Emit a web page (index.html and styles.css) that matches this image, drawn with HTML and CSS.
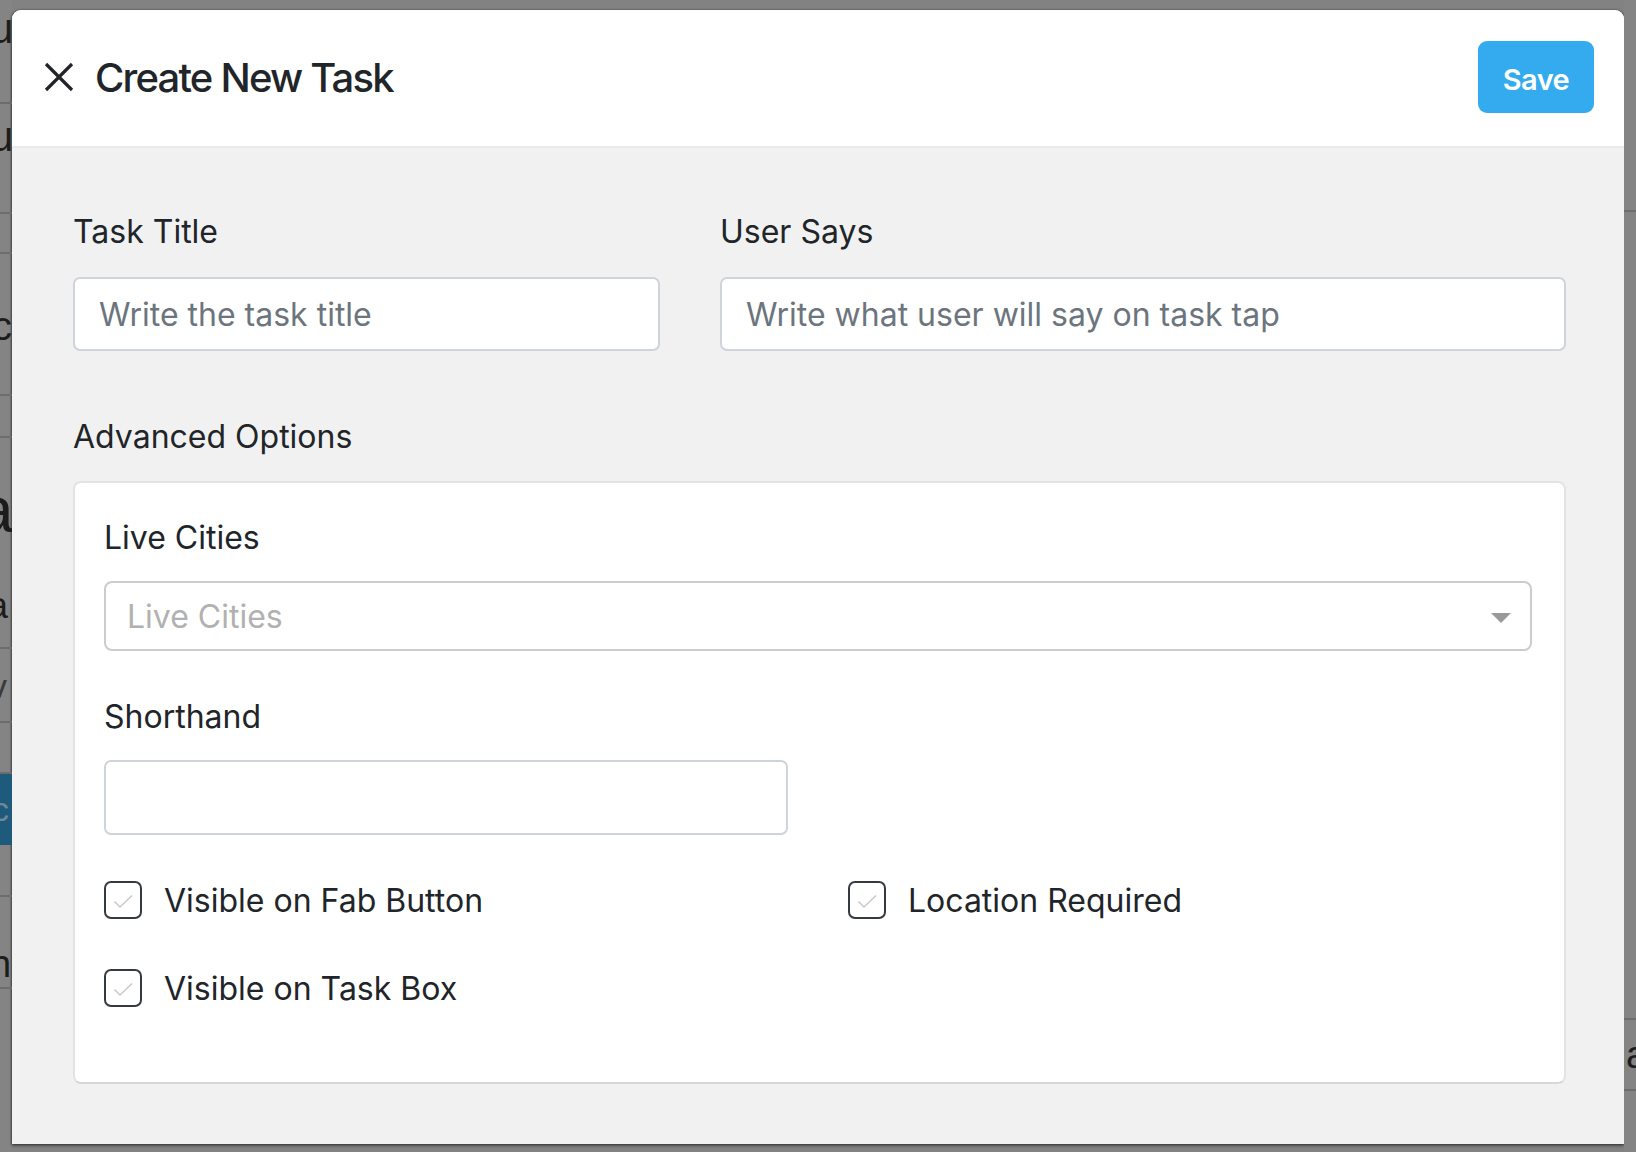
FILE: index.html
```html
<!DOCTYPE html>
<html lang="en">
<head>
<meta charset="utf-8">
<title>Create New Task</title>
<link rel="stylesheet" href="styles.css">
</head>
<body>
<div class="strip strip-left">
  <div class="bg-row lr1"><span class="bg-glyph g-u1">u</span></div>
  <div class="bg-row lr2"><span class="bg-glyph g-u2">u</span></div>
  <div class="bg-row lr3"></div>
  <div class="bg-row lr4"><span class="bg-glyph g-c">c</span></div>
  <div class="bg-row lr5"></div>
  <div class="bg-row lr6"><span class="bg-glyph g-a1">a</span><span class="bg-glyph g-a2">a</span></div>
  <div class="bg-row lr7"><span class="bg-glyph g-v">v</span></div>
  <div class="bg-row lr8"></div>
  <div class="bg-row lr9 bg-blue"><span class="bg-glyph g-c2">c</span></div>
  <div class="bg-row lr10"></div>
  <div class="bg-row lr11"><span class="bg-glyph g-n">n</span></div>
  <div class="bg-row lr12 no-line"></div>
</div>

<div class="modal">
  <header class="modal-header">
    <button class="close-btn" type="button" aria-label="Close">
      <svg width="30" height="30" viewBox="0 0 30 30"><path d="M2 2 L28 28 M28 2 L2 28" stroke="#212529" stroke-width="3.2" fill="none" stroke-linecap="butt"/></svg>
    </button>
    <h1 class="modal-title">Create New Task</h1>
    <button class="save-btn" type="button">Save</button>
  </header>

  <main class="modal-body">
    <div class="top-grid">
      <div class="field">
        <label class="field-label">Task Title</label>
        <input class="text-input" type="text" placeholder="Write the task title">
      </div>
      <div class="field">
        <label class="field-label">User Says</label>
        <input class="text-input" type="text" placeholder="Write what user will say on task tap">
      </div>
    </div>

    <div class="section-label">Advanced Options</div>

    <div class="card">
      <div class="field-label card-label">Live Cities</div>
      <div class="select">
        <span class="select-placeholder">Live Cities</span>
        <span class="select-arrow"></span>
      </div>

      <div class="field-label card-label shorthand-label">Shorthand</div>
      <div class="half-grid">
        <input class="text-input short-input" type="text">
      </div>

      <div class="check-grid">
        <div class="check-item">
          <span class="check-box"><svg width="38" height="38" viewBox="0 0 38 38"><path d="M10.5 20.5 L16 26 L28 14.5" stroke="#c9c9c9" stroke-width="1.5" fill="none"/></svg></span>
          <span class="check-label">Visible on Fab Button</span>
        </div>
        <div class="check-item">
          <span class="check-box"><svg width="38" height="38" viewBox="0 0 38 38"><path d="M10.5 20.5 L16 26 L28 14.5" stroke="#c9c9c9" stroke-width="1.5" fill="none"/></svg></span>
          <span class="check-label">Location Required</span>
        </div>
        <div class="check-item">
          <span class="check-box"><svg width="38" height="38" viewBox="0 0 38 38"><path d="M10.5 20.5 L16 26 L28 14.5" stroke="#c9c9c9" stroke-width="1.5" fill="none"/></svg></span>
          <span class="check-label">Visible on Task Box</span>
        </div>
      </div>
    </div>
  </main>
</div>

<div class="strip strip-right">
  <div class="bg-row rr1"></div>
  <div class="bg-row rr2"></div>
  <div class="bg-row rr3"></div>
  <div class="bg-row rr4"><span class="bg-glyph g-ra">a</span></div>
  <div class="bg-row rr5 no-line"></div>
</div>
</body>
</html>
```

FILE: styles.css
```css
* { box-sizing: border-box; }

html, body {
  margin: 0;
  padding: 0;
  width: 1636px;
  height: 1152px;
  overflow: hidden;
}

body {
  display: flex;
  align-items: flex-start;
  background: #828282;
  font-family: Inter, "Noto Sans", "Liberation Sans", sans-serif;
  color: #212529;
}

/* ---------- dimmed page behind the modal ---------- */
.strip {
  flex: 0 0 12px;
  height: 1152px;
  overflow: hidden;
  display: flex;
  flex-direction: column;
  background: #848484;
}
.strip-right { flex-basis: 12px; }

.bg-row {
  flex: 0 0 auto;
  border-bottom: 2px solid #6c6c6c;
  position: relative;
  white-space: nowrap;
  font-family: "Liberation Sans", sans-serif;
  color: #1c1c1c;
}
.bg-row.no-line { border-bottom: none; flex: 1 1 auto; }
.bg-blue { background: #1e5a7c; }

.lr1 { height: 104px; }
.lr2 { height: 110px; }
.lr3 { height: 40px; }
.lr4 { height: 142px; }
.lr5 { height: 42px; }
.lr6 { height: 211px; }
.lr7 { height: 74px; }
.lr8 { height: 51px; }
.lr9 { height: 71px; border-bottom: none; }
.lr10 { height: 52px; }
.lr11 { height: 92px; }

.rr1 { height: 212px; }
.rr2 { height: 808px; }
.rr3 { height: 0; border-bottom: none; }
.rr4 { height: 71px; }

.bg-glyph {
  position: absolute;
  line-height: 1;
}
.g-u1 { top: 8px; left: -10px; font-size: 42px; }
.g-u2 { top: 12px; left: -10px; font-size: 42px; }
.g-c { top: 52px; left: -8px; font-size: 40px; }
.g-a1 { top: 40px; left: -22px; font-size: 64px; }
.g-a2 { top: 150px; left: -12px; font-size: 36px; }
.g-v { top: 20px; left: -10px; font-size: 34px; color: #3a3a3a; }
.g-c2 { top: 18px; left: -8px; font-size: 34px; color: #6f8797; }
.g-n { top: 48px; left: -10px; font-size: 38px; }
.g-ra { top: 16px; left: 2px; font-size: 38px; }

/* ---------- modal ---------- */
.modal {
  flex: 0 0 1612px;
  height: 1134px;
  margin-top: 10px;
  background: #f1f1f1;
  border-radius: 9px 9px 0 0;
  overflow: hidden;
  display: flex;
  flex-direction: column;
  box-shadow: -1px 0 2px rgba(0,0,0,0.35), 1px 0 2px rgba(0,0,0,0.35), 0 2px 3px rgba(0,0,0,0.4);
}

.modal-header {
  flex: 0 0 138px;
  background: #ffffff;
  border-bottom: 2px solid #e8ebee;
  display: flex;
  align-items: center;
  padding: 0 30px 2px 32px;
}

.close-btn {
  border: none;
  background: none;
  padding: 0;
  margin: 0;
  width: 30px;
  height: 30px;
  display: flex;
  align-items: center;
  justify-content: center;
}

.modal-title {
  margin: 0 0 0 21px;
  font-size: 40px;
  font-weight: 500;
  letter-spacing: -1.8px;
  color: #212529;
  flex: 1 1 auto;
}

.save-btn {
  width: 116px;
  height: 72px;
  border: none;
  border-radius: 9px;
  background: #34abef;
  color: #ffffff;
  font-family: Inter, "Noto Sans", sans-serif;
  font-size: 29px;
  font-weight: 600;
  letter-spacing: -0.6px;
  padding: 5px 0 0 0;
}

.modal-body {
  flex: 1 1 auto;
  padding: 60px 58px 0 61px;
}

.top-grid {
  display: grid;
  grid-template-columns: 587px 846px;
  column-gap: 60px;
}

.field { display: flex; flex-direction: column; }

.field-label {
  display: block;
  font-size: 32px;
  line-height: 48px;
  color: #212529;
  margin-bottom: 21px;
}

.text-input {
  height: 74px;
  width: 100%;
  border: 2px solid #ced4da;
  border-radius: 7px;
  background: #ffffff;
  padding: 0 24px;
  font-family: Inter, "Noto Sans", sans-serif;
  font-size: 32px;
  color: #495057;
  outline: none;
}
.text-input::placeholder { color: #6c757d; opacity: 1; }

.section-label {
  font-size: 32px;
  line-height: 48px;
  margin-top: 62px;
  margin-bottom: 20px;
}

.card {
  background: #ffffff;
  border: 2px solid #e3e3e3;
  border-bottom-color: #d7d7d7;
  border-radius: 8px;
  padding: 31px 32px 70px 29px;
}

.card-label { margin-bottom: 19px; }

.select {
  height: 70px;
  border: 2px solid #cccccc;
  border-radius: 8px;
  display: flex;
  align-items: center;
  justify-content: space-between;
  padding: 0 19px 0 21px;
}
.select-placeholder {
  font-size: 32px;
  color: #b1b1b1;
}
.select-arrow {
  width: 0;
  height: 0;
  border-left: 10px solid transparent;
  border-right: 10px solid transparent;
  border-top: 10px solid #999999;
  margin-top: 4px;
}

.shorthand-label { margin-top: 42px; margin-bottom: 19px; }

.half-grid {
  display: grid;
  grid-template-columns: 1fr 1fr;
  column-gap: 60px;
}
.short-input { height: 75px; }

.check-grid {
  display: grid;
  grid-template-columns: 1fr 1fr;
  column-gap: 60px;
  row-gap: 40px;
  margin-top: 41px;
}

.check-item {
  display: flex;
  align-items: center;
  height: 48px;
}

.check-box {
  width: 38px;
  height: 38px;
  border: 2px solid #343a40;
  border-radius: 7px;
  flex: 0 0 38px;
  position: relative;
  overflow: hidden;
}
.check-box svg {
  position: absolute;
  left: -2px;
  top: -2px;
}

.check-label {
  font-size: 32px;
  margin-left: 22px;
  color: #212529;
}
```
